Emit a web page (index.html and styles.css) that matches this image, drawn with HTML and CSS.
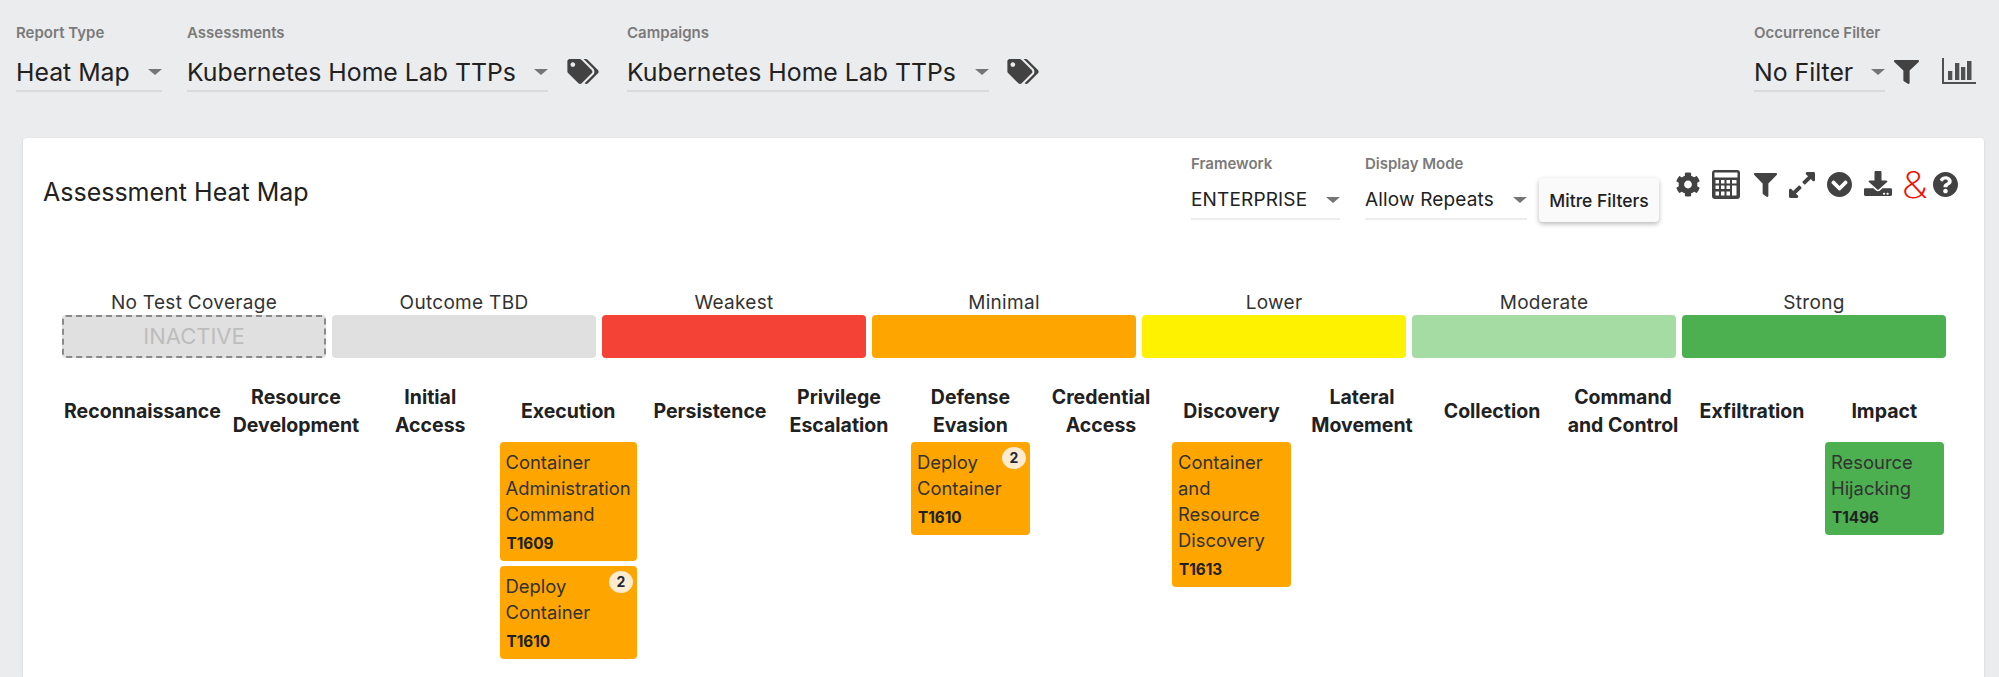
FILE: index.html
```html
<!DOCTYPE html>
<html lang="en">
<head>
<meta charset="utf-8">
<title>Assessment Heat Map</title>
<link rel="stylesheet" href="styles.css">
</head>
<body>
<div class="page">
  <header class="topbar">
    <div class="field w-report"><div class="field-label">Report Type</div><div class="field-value"><span>Heat Map</span><i class="caret"></i></div></div>
    <div class="field w-assess"><div class="field-label">Assessments</div><div class="field-value"><span>Kubernetes Home Lab TTPs</span><i class="caret"></i></div></div>
    <svg class="tag-icon" viewBox="0 0 640 512"><path d="M497.941 225.941L286.059 14.059A48 48 0 0 0 252.118 0H48C21.49 0 0 21.49 0 48v204.118a48 48 0 0 0 14.059 33.941l211.882 211.882c18.744 18.745 49.136 18.746 67.882 0l204.118-204.118c18.745-18.745 18.745-49.137 0-67.882zM112 160c-26.51 0-48-21.49-48-48s21.49-48 48-48 48 21.49 48 48-21.49 48-48 48zm513.941 133.823L421.823 497.941c-18.745 18.745-49.137 18.745-67.882 0l-.36-.36L527.64 323.522c16.999-16.999 26.36-39.6 26.36-63.64s-9.362-46.641-26.36-63.64L331.397 0h48.721a48 48 0 0 1 33.941 14.059l211.882 211.882c18.745 18.745 18.745 49.137 0 67.882z"/></svg>
    <div class="field w-camp"><div class="field-label">Campaigns</div><div class="field-value"><span>Kubernetes Home Lab TTPs</span><i class="caret"></i></div></div>
    <svg class="tag-icon" viewBox="0 0 640 512"><path d="M497.941 225.941L286.059 14.059A48 48 0 0 0 252.118 0H48C21.49 0 0 21.49 0 48v204.118a48 48 0 0 0 14.059 33.941l211.882 211.882c18.744 18.745 49.136 18.746 67.882 0l204.118-204.118c18.745-18.745 18.745-49.137 0-67.882zM112 160c-26.51 0-48-21.49-48-48s21.49-48 48-48 48 21.49 48 48-21.49 48-48 48zm513.941 133.823L421.823 497.941c-18.745 18.745-49.137 18.745-67.882 0l-.36-.36L527.64 323.522c16.999-16.999 26.36-39.6 26.36-63.64s-9.362-46.641-26.36-63.64L331.397 0h48.721a48 48 0 0 1 33.941 14.059l211.882 211.882c18.745 18.745 18.745 49.137 0 67.882z"/></svg>
    <div class="topbar-right">
      <div class="field w-occ"><div class="field-label">Occurrence Filter</div><div class="field-value"><span>No Filter</span><i class="caret"></i></div></div>
      <svg class="top-filter" viewBox="0 0 512 512" preserveAspectRatio="none"><path d="M487.976 0H24.028C2.71 0-8.047 25.866 7.058 40.971L192 225.941V432c0 7.831 3.821 15.17 10.237 19.662l80 55.98C298.02 518.69 320 507.493 320 487.98V225.941l184.947-184.97C520.021 25.896 509.338 0 487.976 0z"/></svg>
      <svg class="top-chart" viewBox="0 0 34 26"><rect x="0" y="0" width="2" height="26"/><rect x="0" y="24" width="34" height="2"/><rect x="6" y="13" width="4.300" height="9"/><rect x="13" y="5" width="4.300" height="17"/><rect x="19" y="9" width="4.300" height="13"/><rect x="25" y="3" width="4.500" height="19"/></svg>
    </div>
  </header>

  <main class="card">
    <div class="card-head">
      <h1 class="card-title">Assessment Heat Map</h1>
      <div class="card-controls">
        <div class="field small w-frame"><div class="field-label">Framework</div><div class="field-value"><span>ENTERPRISE</span><i class="caret"></i></div></div>
        <div class="field small w-mode"><div class="field-label">Display Mode</div><div class="field-value"><span>Allow Repeats</span><i class="caret"></i></div></div>
        <button class="mitre-btn" type="button">Mitre Filters</button>
        <div class="toolbar">
          <svg class="ic-gear" viewBox="0 0 512 512"><path d="M487.4 315.7l-42.6-24.6c4.3-23.2 4.3-47 0-70.2l42.6-24.6c4.9-2.8 7.1-8.6 5.5-14-11.1-35.6-30-67.8-54.7-94.6-3.8-4.1-10-5.1-14.8-2.3L380.8 110c-17.9-15.4-38.5-27.3-60.8-35.1V25.8c0-5.6-3.9-10.5-9.4-11.7-36.7-8.2-74.3-7.8-109.2 0-5.5 1.2-9.4 6.1-9.4 11.7V75c-22.2 7.9-42.8 19.8-60.8 35.1L88.7 85.5c-4.9-2.8-11-1.9-14.8 2.3-24.7 26.7-43.6 58.9-54.7 94.6-1.7 5.4.6 11.2 5.5 14L67.3 221c-4.3 23.2-4.3 47 0 70.2l-42.6 24.6c-4.9 2.8-7.1 8.6-5.5 14 11.1 35.6 30 67.8 54.7 94.6 3.8 4.1 10 5.1 14.8 2.3l42.6-24.6c17.9 15.4 38.5 27.3 60.8 35.1v49.2c0 5.6 3.9 10.5 9.4 11.7 36.7 8.2 74.3 7.8 109.2 0 5.5-1.2 9.4-6.1 9.4-11.7v-49.2c22.2-7.9 42.8-19.8 60.8-35.1l42.6 24.6c4.9 2.8 11 1.9 14.8-2.3 24.7-26.7 43.6-58.9 54.7-94.6 1.5-5.5-.7-11.3-5.6-14.1zM256 336c-44.1 0-80-35.9-80-80s35.9-80 80-80 80 35.9 80 80-35.9 80-80 80z"/></svg>
          <svg class="ic-calc" viewBox="0 0 28 29"><path fill-rule="evenodd" d="M3 0h22a3 3 0 0 1 3 3v23a3 3 0 0 1-3 3H3a3 3 0 0 1-3-3V3a3 3 0 0 1 3-3zM2.500 2.500v5h23v-5zM3.500 10v3.500h3.500V10zM9 10v3.500h3.500V10zM14.500 10v3.500h3.500V10zM20 10v3.500h4.500V10zM3.500 15.500v3.500h3.500v-3.500zM9 15.500v3.500h3.500v-3.500zM14.500 15.500v3.500h3.500v-3.500zM20 15.500v10h4.500v-10zM3.500 21.500v4h3.500v-4zM9 21.500v4h3.500v-4zM14.500 21.500v4h3.500v-4z"/></svg>
          <svg class="ic-filter" viewBox="0 0 512 512" preserveAspectRatio="none"><path d="M487.976 0H24.028C2.71 0-8.047 25.866 7.058 40.971L192 225.941V432c0 7.831 3.821 15.17 10.237 19.662l80 55.98C298.02 518.69 320 507.493 320 487.98V225.941l184.947-184.97C520.021 25.896 509.338 0 487.976 0z"/></svg>
          <svg class="ic-expand" viewBox="0 32 448 448" preserveAspectRatio="none"><path d="M212.686 315.314L120 408l32.922 31.029c15.12 15.12 4.412 40.971-16.97 40.971h-112C10.697 480 0 469.255 0 456V344c0-21.382 25.803-32.09 40.922-16.971L72 360l92.686-92.686c6.248-6.248 16.379-6.248 22.627 0l25.373 25.373c6.249 6.248 6.249 16.378 0 22.627zm22.628-118.628L328 104l-32.922-31.029C279.958 57.851 290.666 32 312.048 32h112C437.303 32 448 42.745 448 56v112c0 21.382-25.803 32.09-40.922 16.971L376 152l-92.686 92.686c-6.248 6.248-16.379 6.248-22.627 0l-25.373-25.373c-6.249-6.248-6.249-16.378 0-22.627z"/></svg>
          <svg class="ic-chev" viewBox="8 8 496 496"><path d="M504 256c0 137-111 248-248 248S8 393 8 256 119 8 256 8s248 111 248 248zM273 369.900l135.500-135.500c9.400-9.400 9.400-24.600 0-33.900l-17-17c-9.400-9.400-24.600-9.400-33.900 0L256 285.100 154.400 183.500c-9.400-9.400-24.600-9.400-33.900 0l-17 17c-9.400 9.400-9.400 24.600 0 33.900L239 369.900c9.400 9.400 24.600 9.400 34 0z"/></svg>
          <svg class="ic-down" viewBox="0 0 512 512" preserveAspectRatio="none"><path d="M216 0h80c13.300 0 24 10.700 24 24v168h87.700c17.800 0 26.700 21.500 14.100 34.100L269.700 378.300c-7.500 7.500-19.800 7.500-27.300 0L90.100 226.100c-12.600-12.600-3.700-34.100 14.100-34.100H192V24c0-13.300 10.700-24 24-24zm296 376v112c0 13.300-10.700 24-24 24H24c-13.300 0-24-10.700-24-24V376c0-13.300 10.700-24 24-24h146.700l49 49c20.100 20.100 52.500 20.100 72.600 0l49-49H488c13.300 0 24 10.700 24 24zm-124 88c0-11-9-20-20-20s-20 9-20 20 9 20 20 20 20-9 20-20zm64 0c0-11-9-20-20-20s-20 9-20 20 9 20 20 20 20-9 20-20z"/></svg>
          <span class="amp">&amp;</span>
          <svg class="ic-help" viewBox="8 8 496 496"><path d="M504 256c0 136.997-111.043 248-248 248S8 392.997 8 256C8 119.083 119.043 8 256 8s248 111.083 248 248zM262.655 90c-54.497 0-89.255 22.957-116.549 63.758-3.536 5.286-2.353 12.415 2.715 16.258l34.699 26.310c5.205 3.947 12.621 3.008 16.665-2.122 17.864-22.658 30.113-35.797 57.303-35.797 20.429 0 45.698 13.148 45.698 32.958 0 14.976-12.363 22.667-32.534 33.976C247.128 238.528 216 254.941 216 296v4c0 6.627 5.373 12 12 12h56c6.627 0 12-5.373 12-12v-1.333c0-28.462 83.186-29.647 83.186-106.667 0-58.002-60.165-102-116.531-102zM256 338c-25.365 0-46 20.635-46 46 0 25.364 20.635 46 46 46s46-20.636 46-46c0-25.365-20.635-46-46-46z"/></svg>
        </div>
      </div>
    </div>

    <section class="legend">
      <div class="legend-item"><div class="legend-label">No Test Coverage</div><div class="legend-box inactive">INACTIVE</div></div>
      <div class="legend-item"><div class="legend-label">Outcome TBD</div><div class="legend-box tbd"></div></div>
      <div class="legend-item"><div class="legend-label">Weakest</div><div class="legend-box weakest"></div></div>
      <div class="legend-item"><div class="legend-label">Minimal</div><div class="legend-box minimal"></div></div>
      <div class="legend-item"><div class="legend-label">Lower</div><div class="legend-box lower"></div></div>
      <div class="legend-item"><div class="legend-label">Moderate</div><div class="legend-box moderate"></div></div>
      <div class="legend-item"><div class="legend-label">Strong</div><div class="legend-box strong"></div></div>
    </section>

    <section class="matrix">
      <div class="col"><div class="col-head">Reconnaissance</div></div>
      <div class="col"><div class="col-head">Resource Development</div></div>
      <div class="col"><div class="col-head">Initial<br>Access</div></div>
      <div class="col">
        <div class="col-head">Execution</div>
        <div class="tech minimal"><div class="tech-name">Container Administration Command</div><div class="tech-code">T1609</div></div>
        <div class="tech minimal"><span class="badge">2</span><div class="tech-name">Deploy<br>Container</div><div class="tech-code">T1610</div></div>
      </div>
      <div class="col"><div class="col-head">Persistence</div></div>
      <div class="col"><div class="col-head">Privilege Escalation</div></div>
      <div class="col">
        <div class="col-head">Defense<br>Evasion</div>
        <div class="tech minimal"><span class="badge">2</span><div class="tech-name">Deploy<br>Container</div><div class="tech-code">T1610</div></div>
      </div>
      <div class="col"><div class="col-head">Credential Access</div></div>
      <div class="col">
        <div class="col-head">Discovery</div>
        <div class="tech minimal"><div class="tech-name">Container<br>and<br>Resource Discovery</div><div class="tech-code">T1613</div></div>
      </div>
      <div class="col"><div class="col-head">Lateral Movement</div></div>
      <div class="col"><div class="col-head">Collection</div></div>
      <div class="col"><div class="col-head">Command and&nbsp;Control</div></div>
      <div class="col"><div class="col-head">Exfiltration</div></div>
      <div class="col">
        <div class="col-head">Impact</div>
        <div class="tech strong"><div class="tech-name">Resource Hijacking</div><div class="tech-code">T1496</div></div>
      </div>
    </section>
  </main>
</div>
</body>
</html>
```
FILE: styles.css
```css
* { box-sizing: border-box; }
html, body { margin: 0; height: 100%; overflow: hidden; }
body { background: #ebecee; color: #212121; font-family: Inter, "Liberation Sans", sans-serif; }
.page { height: 677px; display: flex; flex-direction: column; }

.topbar { height: 138px; padding: 25px 23px 0 16px; display: flex; align-items: flex-start; }
.topbar-right { margin-left: auto; display: flex; align-items: flex-start; }

.field-label { height: 16px; font-size: 15px; line-height: 16px; font-weight: 600; color: #7a7a7a; white-space: nowrap; }
.field-value { margin-top: 13px; height: 38px; line-height: 36px; font-size: 24.8px; border-bottom: 2px solid #d9dadc; display: flex; justify-content: space-between; align-items: center; color: #212121; white-space: nowrap; }
.caret { width: 0; height: 0; margin-right: 0; border-left: 7px solid transparent; border-right: 7px solid transparent; border-top: 6px solid #757575; }
.field.small .field-value { margin-top: 10px; font-size: 19px; letter-spacing: 0.15px; border-bottom-color: #ececec; }

.w-report { width: 146px; margin-right: 25px; }
.w-assess { width: 361px; margin-right: 19px; }
.w-camp { width: 362px; margin-left: 28px; margin-right: 18px; }
.w-occ { width: 131px; margin-right: 9px; }
.tag-icon { width: 32px; height: 25px; margin-top: 34px; fill: #424242; }
.top-filter { width: 25px; height: 24px; margin-top: 35px; fill: #424242; }
.top-chart { width: 34px; height: 26px; margin-top: 33px; margin-left: 23px; fill: #505050; }

.card { flex: 1; margin: 0 15px 0 23px; padding: 18px 0 0; background: #fff; border-radius: 4px 4px 0 0; box-shadow: 0 1px 3px rgba(0,0,0,.12); }
.card-head { display: flex; justify-content: space-between; align-items: flex-start; padding: 0 26px 0 20px; }
.card-title { margin: 20px 0 0; font-size: 25px; line-height: 32px; font-weight: 400; color: #212121; }
.card-controls { display: flex; align-items: flex-start; }
.w-frame { width: 149px; margin-right: 25px; }
.w-mode { width: 162px; margin-right: 12px; }
.mitre-btn { width: 120px; height: 44px; margin-top: 22px; padding: 0; border: 0; border-radius: 4px; background: #fafafa; box-shadow: 0 2px 5px rgba(0,0,0,.28); font: 500 17.5px Inter, sans-serif; color: #212121; }
.toolbar { display: flex; align-items: center; height: 29px; margin-top: 14px; margin-left: 16px; fill: #424242; }
.ic-gear { width: 26px; height: 25px; }
.ic-calc { width: 28px; height: 29px; margin-left: 11px; }
.ic-filter { width: 23px; height: 24px; margin-left: 14px; }
.ic-expand { width: 26px; height: 26px; margin-left: 12px; }
.ic-chev { width: 25px; height: 25px; margin-left: 12px; }
.ic-down { width: 28px; height: 25px; margin-left: 12px; margin-top: -3px; }
.amp { width: 25px; margin-left: 10px; color: #f20d00; font-size: 37px; line-height: 29px; font-weight: 200; text-align: center; transform: scaleX(1.15); }
.ic-help { width: 25px; height: 25px; margin-left: 6px; }

.legend { margin: 70px 38px 0 39px; display: grid; grid-template-columns: repeat(7, 1fr); gap: 6px; }
.legend-label { height: 23px; font-size: 19px; line-height: 22px; text-align: center; color: #333; letter-spacing: 0.3px; }
.legend-box { height: 43px; border-radius: 4px; }
.inactive { background: #e0e0e0; border: 2px dashed #8a8a8a; color: #bdbdbd; font-size: 22px; line-height: 39px; text-align: center; }
.tbd { background: #e0e0e0; }
.weakest { background: #f44336; }
.minimal { background: #ffa500; }
.lower { background: #fff200; }
.moderate { background: #a5dca3; }
.strong { background: #4caf50; }

.matrix { margin: 25px 0 0 39px; display: grid; grid-template-columns: 161px 146px 122.5px 153.5px 130px 128px 135px 126px 135px 126px 134px 128px 130px 134.5px; }
.col { display: flex; flex-direction: column; align-items: stretch; padding: 0 8px; }
.col-head { height: 56px; margin: 0 -8px 3px; display: flex; align-items: center; justify-content: center; text-align: center; font-size: 19.5px; line-height: 28px; font-weight: 650; color: #212121; }
.tech { position: relative; margin-bottom: 5px; padding: 6.5px 6px 4.5px; border-radius: 4px; color: #333; }
.tech-name { font-size: 18.4px; line-height: 26px; }
.tech-code { margin: 4px 0 0 1px; font-size: 15.3px; line-height: 26px; font-weight: 700; color: #212121; }
.badge { position: absolute; top: 5px; right: 4px; width: 24px; height: 22px; border-radius: 50%; background: #fdebd0; color: #1f2937; font-size: 14px; line-height: 22px; font-weight: 700; text-align: center; }
```
